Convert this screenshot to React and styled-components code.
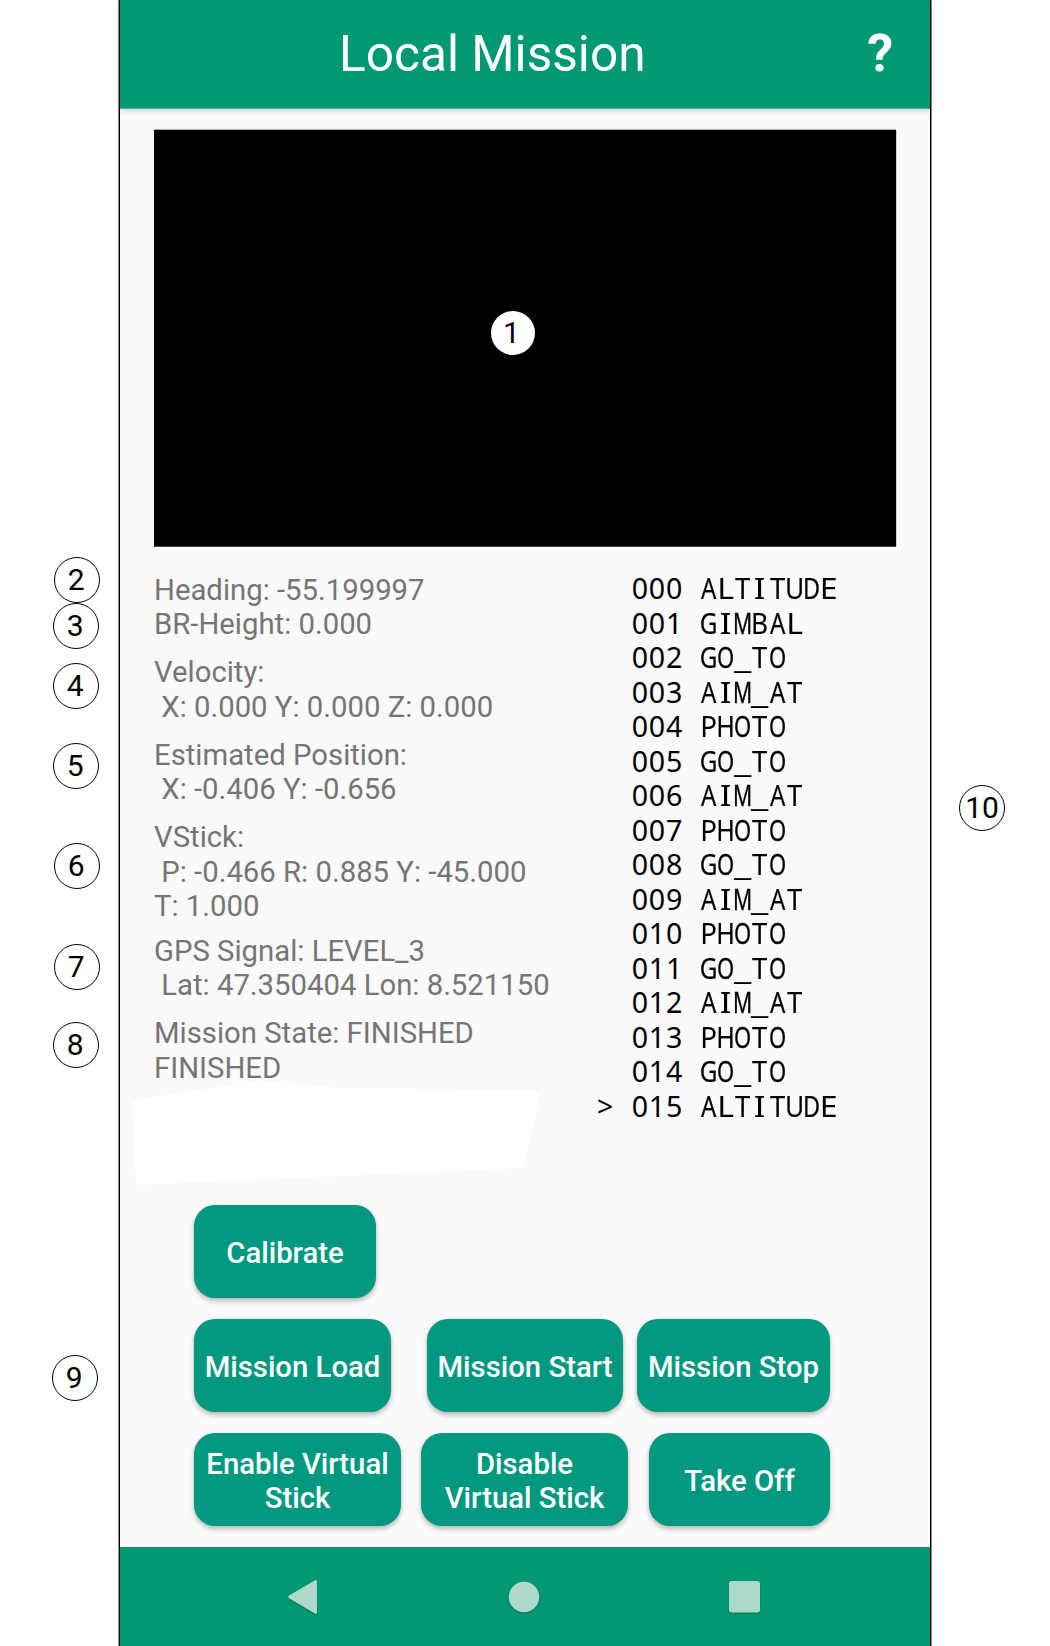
import React from "react";
import styled, { createGlobalStyle } from "styled-components";

const GlobalStyle = createGlobalStyle`
  * { box-sizing: border-box; }
  body { margin: 0; background: #fff; font-family: Roboto, "Liberation Sans", sans-serif; }
`;

const Page = styled.main`
  position: relative;
  width: 1050px;
  height: 1646px;
  overflow: hidden;
  background: #fff;
`;

const Phone = styled.section`
  display: flex;
  flex-direction: column;
  width: 812px;
  height: 1646px;
  margin-left: 119px;
  background: #fafafa;
  border: solid #000;
  border-width: 0 1px;
  box-shadow: 0 0 0 1px #8a8a8a;
`;

const Header = styled.header`
  display: flex;
  align-items: center;
  justify-content: space-between;
  height: 109px;
  flex: none;
  padding: 0 37px 0 219px;
  color: #fff;
  background: #009974;
  border-bottom: 1px solid #3bb092;
  box-shadow: 0 2px 6px rgba(0, 0, 0, 0.16);
`;

const Title = styled.h1`
  margin: 0;
  font-size: 49.6px;
  font-weight: 400;
  line-height: 60px;
  white-space: nowrap;
`;

const Help = styled.button`
  padding: 0;
  border: 0;
  background: none;
  color: #fff;
  font: 700 52px/60px Roboto, sans-serif;
`;

const Video = styled.div`
  flex: none;
  width: 742px;
  height: 416px;
  margin: 21px 0 0 34px;
  background: #000;
  box-shadow: 0 -1px #aaa, 1px 0 #ccc, 0 1px #444;
`;

const Info = styled.div`
  display: flex;
  flex: none;
  height: 659px;
  padding-left: 34px;
`;

const Status = styled.div`
  width: 443px;
  padding-top: 26.5px;
  color: #757575;
  font-size: 29.3px;
  line-height: 34.5px;
`;

const Reading = styled.p`
  margin: 0 0 ${(p) => p.$gap ?? 13.6}px;
  white-space: pre;
`;

const Blank = styled.div`
  width: 410px;
  height: 104px;
  margin: -4.5px 0 0 -22px;
  background: #fff;
  clip-path: polygon(0 19px, 127px 0, 208px 7px, 409px 9.5px, 391px 87px, 208px 95px, 4px 104px);
`;

const Mission = styled.ol`
  margin: 0;
  padding: 25.3px 0 0;
  list-style: none;
  color: #000;
  font: 28.6px/34.5px "Noto Sans", sans-serif;
`;

const Step = styled.li`
  display: flex;
  height: 34.5px;
`;

const Marker = styled.span`
  width: 34.3px;
`;

const Index = styled.span`
  width: 68.6px;
  padding-left: 0.4px;
  letter-spacing: 0.8px;
`;

const Cell = styled.span`
  display: flex;
  justify-content: center;
  width: 17.16px;
  transform: scaleX(${(p) => p.$stretch});
  -webkit-text-stroke: ${(p) => Math.max(0, 1 - p.$stretch) * 1.3}px #000;
`;

const Controls = styled.div`
  display: flex;
  flex-direction: column;
  flex: none;
  gap: 21px;
  height: 342px;
  padding-left: 74px;
`;

const ButtonRow = styled.div`
  display: flex;
`;

const Button = styled.button`
  width: ${(p) => p.$width}px;
  height: 93px;
  margin: 0 0 0 ${(p) => p.$space ?? 0}px;
  padding: 3px 0 0;
  border: 0;
  border-radius: 21px;
  color: #fff;
  background: #009980;
  box-shadow: 0 3px 5px rgba(0, 0, 0, 0.26), 0 0 2px rgba(0, 0, 0, 0.1);
  font: 500 29.3px/34.4px Roboto, sans-serif;
  white-space: pre;
`;

const NavBar = styled.nav`
  display: flex;
  align-items: center;
  justify-content: space-between;
  flex: 1;
  padding: 0 169px 0 166px;
  background: #009974;
  svg { display: block; fill: #aed8ca; filter: drop-shadow(0 1px 1px rgba(0, 0, 0, 0.25)); }
`;

const Callout = styled.span`
  position: absolute;
  left: ${(p) => p.$x - p.$size / 2}px;
  top: ${(p) => p.$y - p.$size / 2}px;
  width: ${(p) => p.$size}px;
  height: ${(p) => p.$size}px;
  display: flex;
  align-items: center;
  justify-content: center;
  padding-right: ${(p) => p.$shift ?? 1.5}px;
  border: ${(p) => (p.$plain ? "0" : "1.4px solid #000")};
  border-radius: 50%;
  background: #fff;
  color: #000;
  font-size: 30px;
  line-height: 36px;
`;

const readings = [
  { text: "Heading: -55.199997\nBR-Height: 0.000" },
  { text: "Velocity:\n X: 0.000 Y: 0.000 Z: 0.000" },
  { text: "Estimated Position:\n X: -0.406 Y: -0.656" },
  { text: "VStick:\n P: -0.466 R: 0.885 Y: -45.000\nT: 1.000", gap: 10 },
  { text: "GPS Signal: LEVEL_3\n Lat: 47.350404 Lon: 8.521150" },
  { text: "Mission State: FINISHED\nFINISHED", gap: 0 },
];

const commands = [
  "ALTITUDE", "GIMBAL", "GO_TO", "AIM_AT", "PHOTO", "GO_TO", "AIM_AT", "PHOTO",
  "GO_TO", "AIM_AT", "PHOTO", "GO_TO", "AIM_AT", "PHOTO", "GO_TO", "ALTITUDE",
];

// Horizontal stretch that fits each proportional glyph to the fixed column width.
const stretch = {
  A: 0.84, M: 0.74, O: 0.77, G: 0.85, U: 0.92, D: 0.82, H: 0.88,
  B: 0.92, P: 0.97, T: 0.96, L: 1.12, E: 1.12, I: 1.2, _: 1.36,
};

const buttonRows = [
  [{ label: "Calibrate", width: 182 }],
  [
    { label: "Mission Load", width: 197 },
    { label: "Mission Start", width: 196, space: 36 },
    { label: "Mission Stop", width: 193, space: 14 },
  ],
  [
    { label: "Enable Virtual\nStick", width: 207 },
    { label: "Disable\nVirtual Stick", width: 207, space: 20 },
    { label: "Take Off", width: 181, space: 21 },
  ],
];

const callouts = [
  { n: 1, x: 513, y: 333, size: 44, plain: true, shift: 3 },
  { n: 2, x: 77, y: 580, size: 46 },
  { n: 3, x: 76, y: 626, size: 46 },
  { n: 4, x: 76, y: 686, size: 46 },
  { n: 5, x: 76, y: 766, size: 46 },
  { n: 6, x: 77, y: 866, size: 46 },
  { n: 7, x: 77, y: 967, size: 46 },
  { n: 8, x: 76, y: 1045, size: 46 },
  { n: 9, x: 75, y: 1378, size: 46 },
  { n: 10, x: 982, y: 808, size: 46, shift: 0 },
];

export default function App() {
  return (
    <Page>
      <GlobalStyle />
      <Phone>
        <Header>
          <Title>Local Mission</Title>
          <Help>?</Help>
        </Header>
        <Video />
        <Info>
          <Status>
            {readings.map((r) => (
              <Reading key={r.text} $gap={r.gap}>{r.text}</Reading>
            ))}
            <Blank />
          </Status>
          <Mission>
            {commands.map((name, i) => (
              <Step key={i}>
                <Marker>{i === commands.length - 1 ? ">" : null}</Marker>
                <Index>{String(i).padStart(3, "0")}</Index>
                {[...name].map((ch, k) => (
                  <Cell key={k} $stretch={stretch[ch] ?? 1}>{ch}</Cell>
                ))}
              </Step>
            ))}
          </Mission>
        </Info>
        <Controls>
          {buttonRows.map((row, i) => (
            <ButtonRow key={i}>
              {row.map((b) => (
                <Button key={b.label} $width={b.width} $space={b.space}>{b.label}</Button>
              ))}
            </ButtonRow>
          ))}
        </Controls>
        <NavBar>
          <svg width="34" height="36" viewBox="0 0 34 36">
            <path d="M29.2 1.3 3 16.6Q1.4 18 3 19.3L29.2 34.7Q31 35.2 31 33.2V2.8Q31 .8 29.2 1.3Z" />
          </svg>
          <svg width="32" height="32" viewBox="0 0 32 32">
            <circle cx="16" cy="16" r="15.2" />
          </svg>
          <svg width="33" height="33" viewBox="0 0 33 33">
            <rect x="1" y="1" width="31" height="31.4" rx="3" />
          </svg>
        </NavBar>
      </Phone>
      {callouts.map((c) => (
        <Callout key={c.n} $x={c.x} $y={c.y} $size={c.size} $plain={c.plain} $shift={c.shift}>
          {c.n}
        </Callout>
      ))}
    </Page>
  );
}
